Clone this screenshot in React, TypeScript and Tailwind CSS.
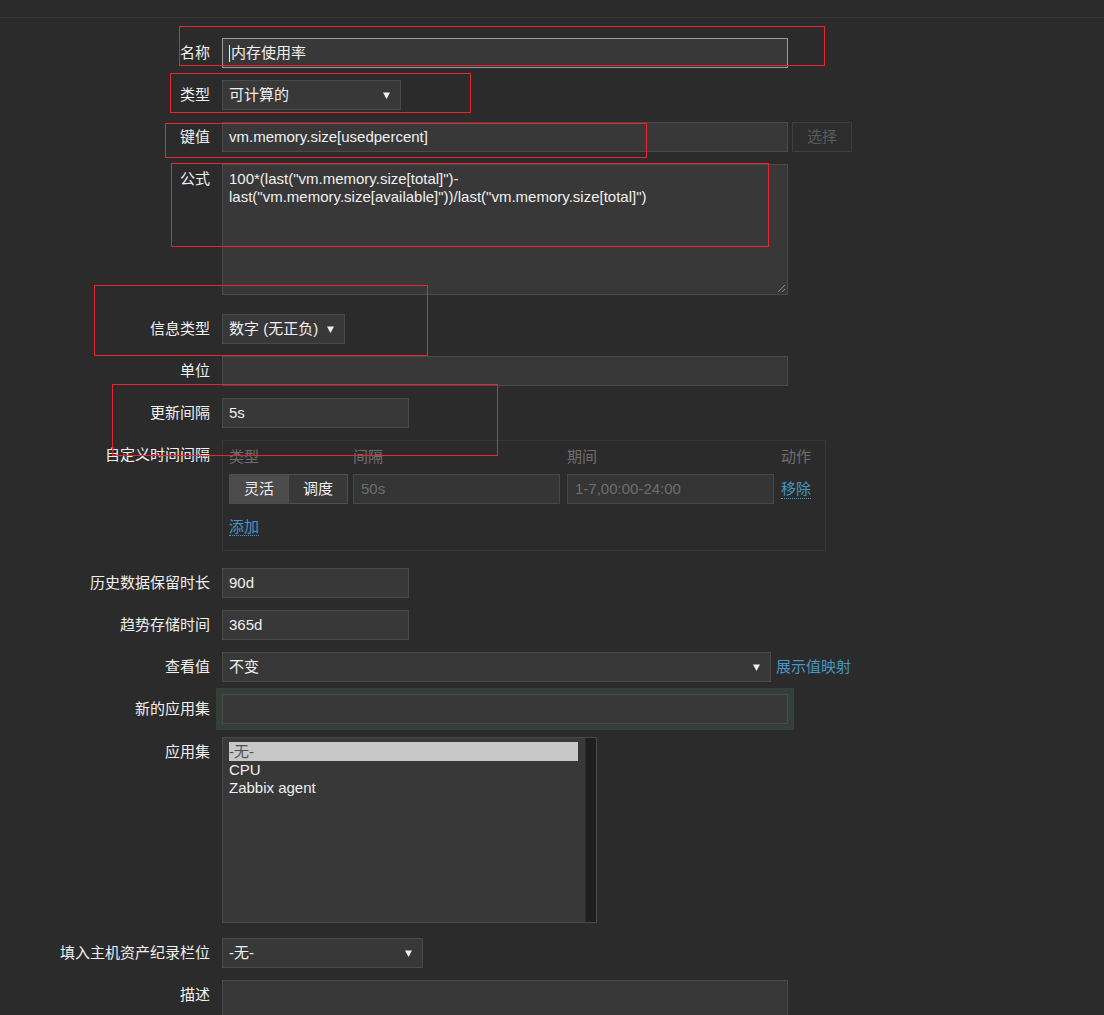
import React from "react";

const font = {
  fontFamily: '"Liberation Sans", Arial, "Noto Sans CJK SC", sans-serif',
};

function Label({ children }: { children: React.ReactNode }) {
  return (
    <div className="w-[210px] shrink-0 text-right text-[15px] leading-[30px] text-[#f0f0f0] whitespace-nowrap">
      {children}
    </div>
  );
}

function Row({ label, children, className = "" }: { label: string; children: React.ReactNode; className?: string }) {
  return (
    <div className={"flex items-start gap-[12px] " + className}>
      <Label>{label}</Label>
      <div className="flex items-start">{children}</div>
    </div>
  );
}

function Arrow() {
  return (
    <svg width="7" height="7" viewBox="0 0 7 7" className="shrink-0">
      <path d="M0 0.5 L7 0.5 L3.5 7 Z" fill="#f0f0f0" />
    </svg>
  );
}

function Select({ value, w }: { value: string; w: string }) {
  return (
    <div
      className={
        "h-[30px] flex items-center justify-between pl-[6px] pr-[10px] bg-[#383838] border border-[#4a4a4a] text-[15px] text-[#f0f0f0] " +
        w
      }
    >
      <span className="truncate">{value}</span>
      <Arrow />
    </div>
  );
}

function Input({ value = "", w, extra = "" }: { value?: string; w: string; extra?: string }) {
  return (
    <div
      className={
        "h-[30px] flex items-center px-[6px] bg-[#383838] border border-[#4a4a4a] text-[15px] text-[#f0f0f0] " +
        w +
        " " +
        extra
      }
    >
      {value}
    </div>
  );
}

function RedBox({ c }: { c: string }) {
  return <div className={"absolute border border-[#e8262f] pointer-events-none " + c} />;
}

export default function App() {
  return (
    <div className="relative min-h-[1015px] w-[1104px] overflow-hidden bg-[#2b2b2b]" style={font}>
      <div className="h-[18px] border-b border-[#363636] bg-[#2a2a2a]" />
      <div className="pt-[20px] flex flex-col">
        <Row label="名称">
          <div className="w-[566px] h-[30px] flex items-center px-[6px] bg-[#383838] border border-[#9a9a9a] text-[15px] text-[#f0f0f0]">
            <span className="inline-block w-[1px] h-[17px] bg-[#f0f0f0] mr-[1px]" />
            内存使用率
          </div>
        </Row>
        <Row label="类型" className="mt-[12px]">
          <Select value="可计算的" w="w-[179px]" />
        </Row>
        <Row label="键值" className="mt-[12px]">
          <Input value="vm.memory.size[usedpercent]" w="w-[566px]" />
          <div className="ml-[4px] w-[60px] h-[30px] flex items-center justify-center border border-[#3e3e3e] bg-[#2d2d2d] text-[15px] text-[#5c5c5c]">
            选择
          </div>
        </Row>
        <Row label="公式" className="mt-[12px]">
          <div className="relative w-[566px] h-[131px] px-[6px] pt-[5px] bg-[#383838] border border-[#4a4a4a] text-[15px] leading-[18px] text-[#f0f0f0]">
            100*(last("vm.memory.size[total]")-last("vm.memory.size[available]"))/last("vm.memory.size[total]")
            <svg width="10" height="10" viewBox="0 0 10 10" className="absolute right-[1px] bottom-[1px]">
              <path d="M9 2 L2 9 M9 6 L6 9" stroke="#8a8a8a" strokeWidth="1" />
            </svg>
          </div>
        </Row>
        <Row label="信息类型" className="mt-[19px]">
          <Select value="数字 (无正负)" w="w-[123px]" />
        </Row>
        <Row label="单位" className="mt-[12px]">
          <Input w="w-[566px]" />
        </Row>
        <Row label="更新间隔" className="mt-[12px]">
          <Input value="5s" w="w-[187px]" />
        </Row>
        <Row label="自定义时间间隔" className="mt-[12px]">
          <div className="w-[604px] h-[111px] border border-[#363636] px-[6px] pt-[7px]">
            <div className="flex text-[15px] leading-[18px] text-[#6e6e6e]">
              <div className="w-[124px]">类型</div>
              <div className="w-[214px]">间隔</div>
              <div className="w-[214px]">期间</div>
              <div>动作</div>
            </div>
            <div className="flex items-center mt-[8px]">
              <div className="flex w-[124px]">
                <div className="w-[60px] h-[30px] flex items-center justify-center bg-[#4b4b4b] border border-[#4f4f4f] text-[15px] text-[#f0f0f0]">
                  灵活
                </div>
                <div className="w-[59px] h-[30px] flex items-center justify-center bg-[#383838] border border-l-0 border-[#4f4f4f] text-[15px] text-[#f0f0f0]">
                  调度
                </div>
              </div>
              <div className="w-[214px]">
                <div className="w-[207px] h-[30px] flex items-center px-[7px] bg-[#353535] border border-[#474747] text-[15px] text-[#6e6e6e]">
                  50s
                </div>
              </div>
              <div className="w-[214px]">
                <div className="w-[207px] h-[30px] flex items-center px-[7px] bg-[#353535] border border-[#474747] text-[15px] text-[#6e6e6e]">
                  1-7,00:00-24:00
                </div>
              </div>
              <span className="text-[15px] text-[#4796c4] border-b border-dotted border-[#4796c4] leading-[18px]">移除</span>
            </div>
            <div className="mt-[11px]">
              <span className="text-[15px] text-[#4796c4] border-b border-dotted border-[#4796c4] leading-[18px]">添加</span>
            </div>
          </div>
        </Row>
        <Row label="历史数据保留时长" className="mt-[17px]">
          <Input value="90d" w="w-[187px]" />
        </Row>
        <Row label="趋势存储时间" className="mt-[12px]">
          <Input value="365d" w="w-[187px]" />
        </Row>
        <Row label="查看值" className="mt-[12px]">
          <Select value="不变" w="w-[549px]" />
          <span className="ml-[5px] leading-[30px] text-[15px] text-[#4796c4]">展示值映射</span>
        </Row>
        <Row label="新的应用集" className="mt-[12px]">
          <Input w="w-[566px]" extra="shadow-[0_0_0_6px_#33403a]" />
        </Row>
        <Row label="应用集" className="mt-[13px]">
          <div className="relative w-[375px] h-[186px] bg-[#383838] border border-[#4a4a4a] flex">
            <div className="flex-1 pl-[6px] pt-[4px] text-[15px] leading-[18px] text-[#f0f0f0]">
              <div className="w-[349px] bg-[#c8c8c8] text-[#505050] leading-[19px]">-无-</div>
              <div>CPU</div>
              <div>Zabbix agent</div>
            </div>
            <div className="w-[11px] h-full bg-[#1f1f1f] border-l border-[#2a2a2a]" />
          </div>
        </Row>
        <Row label="填入主机资产纪录栏位" className="mt-[15px]">
          <Select value="-无-" w="w-[201px]" />
        </Row>
        <Row label="描述" className="mt-[12px]">
          <div className="w-[566px] h-[80px] bg-[#383838] border border-[#4a4a4a]" />
        </Row>
      </div>

      <RedBox c="left-[179px] top-[26px] w-[646px] h-[40px]" />
      <RedBox c="left-[170px] top-[73px] w-[301px] h-[40px]" />
      <RedBox c="left-[165px] top-[123px] w-[482px] h-[35px]" />
      <RedBox c="left-[171px] top-[163px] w-[598px] h-[84px]" />
      <RedBox c="left-[94px] top-[285px] w-[334px] h-[71px]" />
      <RedBox c="left-[112px] top-[384px] w-[386px] h-[72px]" />
    </div>
  );
}
